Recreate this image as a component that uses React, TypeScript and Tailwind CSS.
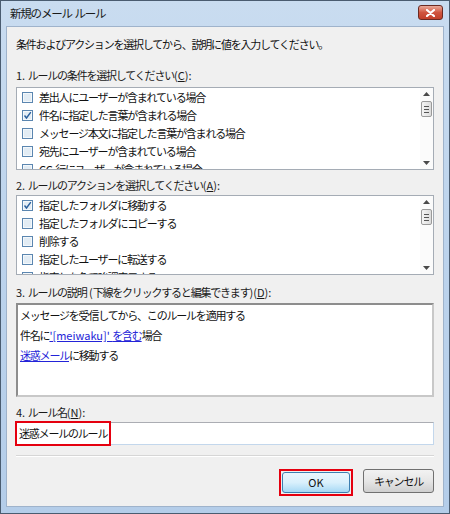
import React from 'react';

const font = { fontFamily: '"Noto Sans CJK JP", "Noto Sans", sans-serif' };

// latin bits keep normal spacing, kana/kanji are squeezed
const L = ({ children }: { children: React.ReactNode }) => <span className="tracking-normal">{children}</span>;

const CheckBox = ({ checked }: { checked?: boolean }) => (
  <svg width="11" height="11" viewBox="0 0 11 11" className="shrink-0">
    <rect x="0.5" y="0.5" width="10" height="10" fill="#f4f8fb" stroke="#5b86b0" />
    <rect x="2" y="2" width="7" height="7" fill="#e2ecf4" />
    {checked && <path d="M2.5 5.5 L4.5 8 L8.8 2.2" fill="none" stroke="#2a5f9c" strokeWidth="1.4" />}
  </svg>
);

const ScrollBar = () => (
  <div className="w-[13px] h-full flex flex-col items-center justify-between py-[4px] bg-[#fbfbfb]">
    <svg width="7" height="4" viewBox="0 0 7 4"><path d="M0 4 L3.5 0 L7 4 Z" fill="#4a4a4a" /></svg>
    <div className="flex-1 w-full flex flex-col items-center pt-[5px]">
      <div className="w-[11px] h-[16px] rounded-[2px] border border-[#9a9a9a] bg-gradient-to-r from-[#f4f4f4] to-[#dcdcdc] flex flex-col items-center justify-center gap-[2px]">
        <div className="w-[5px] h-px bg-[#555]" />
        <div className="w-[5px] h-px bg-[#555]" />
        <div className="w-[5px] h-px bg-[#555]" />
      </div>
    </div>
    <svg width="7" height="4" viewBox="0 0 7 4"><path d="M0 0 L3.5 4 L7 0 Z" fill="#4a4a4a" /></svg>
  </div>
);

const CheckList = ({ items, h }: { items: { t: React.ReactNode; c?: boolean }[]; h: string }) => (
  <div className={`flex border border-[#a5acb5] bg-white ${h}`}>
    <div className="flex-1 overflow-hidden pl-[5px]">
      {items.map((it, i) => (
        <div key={i} className="h-[18px] flex items-center gap-[6px] whitespace-nowrap">
          <CheckBox checked={it.c} />
          <span>{it.t}</span>
        </div>
      ))}
    </div>
    <ScrollBar />
  </div>
);

const Label = ({ num, text, k }: { num: string; text: React.ReactNode; k: string }) => (
  <div className="h-[14px] leading-[14px] text-[#1a1a1a]">
    <L>{num} </L>
    {text}
    <L>
      (<span className="underline">{k}</span>):
    </L>
  </div>
);

export default function App() {
  return (
    <div
      className="w-[450px] h-[514px] flex flex-col border border-[#4a5c70] bg-gradient-to-b from-[#c9dcf0] via-[#bcd3ec] to-[#b4cde9] text-[11px] tracking-[-1.2px] text-[#111]"
      style={font}
    >
      {/* title bar */}
      <div className="h-[25px] shrink-0 flex items-center justify-between pl-[9px] pr-[6px]">
        <span className="text-[11.5px] text-[#1a1a1a]">
          新規のメール<L> </L>ルール
        </span>
        <div className="w-[25px] h-[15px] mt-[-2px] rounded-[3px] border border-[#6b2a22] bg-gradient-to-b from-[#e9a99a] via-[#d0553f] to-[#c2402a] flex items-center justify-center">
          <svg width="9" height="8" viewBox="0 0 9 8">
            <path d="M1 1 L8 7 M8 1 L1 7" stroke="#fff" strokeWidth="2.2" strokeLinecap="round" />
          </svg>
        </div>
      </div>

      {/* client area */}
      <div className="flex-1 mx-[5px] mb-[6px] bg-[#f0f0f0] border border-[#9fb3cb] flex flex-col px-[9px]">
        <div className="mt-[10px] h-[14px] leading-[14px]">条件およびアクションを選択してから、説明に値を入力してください。</div>

        <div className="mt-[17px]">
          <Label num="1." text="ルールの条件を選択してください" k="C" />
        </div>
        <div className="mt-[5px]">
          <CheckList
            h="h-[83px]"
            items={[
              { t: '差出人にユーザーが含まれている場合' },
              { t: '件名に指定した言葉が含まれる場合', c: true },
              { t: 'メッセージ本文に指定した言葉が含まれる場合' },
              { t: '宛先にユーザーが含まれている場合' },
              { t: <><L>CC </L>行にユーザーが含まれている場合</> },
            ]}
          />
        </div>

        <div className="mt-[8px]">
          <Label num="2." text="ルールのアクションを選択してください" k="A" />
        </div>
        <div className="mt-[3px]">
          <CheckList
            h="h-[80px]"
            items={[
              { t: '指定したフォルダに移動する', c: true },
              { t: '指定したフォルダにコピーする' },
              { t: '削除する' },
              { t: '指定したユーザーに転送する' },
              { t: '指定した色で強調表示する' },
            ]}
          />
        </div>

        <div className="mt-[10px]">
          <Label
            num="3."
            text={
              <>
                ルールの説明<L> (</L>下線をクリックすると編集できます<L>)</L>
              </>
            }
            k="D"
          />
        </div>
        <div className="mt-[4px] h-[94px] bg-white border-2 border-[#8d8d8d] border-r-[#c8c8c8] border-b-[#c8c8c8] pl-[2px] pt-[3px] flex flex-col gap-[6px]">
          <div className="h-[14px] leading-[14px]">メッセージを受信してから、このルールを適用する</div>
          <div className="h-[14px] leading-[14px]">
            件名に
            <span className="text-[#2323d8] underline">
              <L>'[meiwaku]' </L>を含む
            </span>
            場合
          </div>
          <div className="h-[14px] leading-[14px]">
            <span className="text-[#2323d8] underline">迷惑メール</span>に移動する
          </div>
        </div>

        <div className="mt-[8px]">
          <Label num="4." text="ルール名" k="N" />
        </div>
        <div className="mt-[3px] h-[23px] bg-white border border-[#abadb3] border-r-[#c3d7ec] border-b-[#c3d7ec] flex items-stretch">
          <div className="ml-[-2px] my-[-2px] px-[2px] border-2 border-[#e5000f] flex items-center">迷惑メールのルール</div>
        </div>

        <div className="mt-[10px] h-px bg-[#d6d6d6] border-b border-white box-content" />

        <div className="mt-[12px] flex justify-end gap-[10px]">
          <div className="border-2 border-[#e5000f] p-px">
            <button className="w-[68px] h-[21px] rounded-[3px] border border-[#3c7fb1] bg-gradient-to-b from-[#eaf6fd] via-[#d9f0fc] to-[#a7d9f5] text-[11px] tracking-normal">
              OK
            </button>
          </div>
          <button className="w-[71px] h-[24px] rounded-[3px] border border-[#707070] bg-gradient-to-b from-[#f2f2f2] via-[#e6e6e6] to-[#cfcfcf] text-[11px]">
            キャンセル
          </button>
        </div>
      </div>
    </div>
  );
}
